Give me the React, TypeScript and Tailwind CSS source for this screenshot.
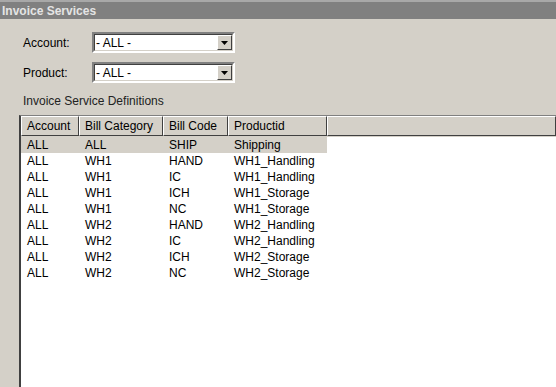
const rows = [
  ["ALL", "ALL", "SHIP", "Shipping"],
  ["ALL", "WH1", "HAND", "WH1_Handling"],
  ["ALL", "WH1", "IC", "WH1_Handling"],
  ["ALL", "WH1", "ICH", "WH1_Storage"],
  ["ALL", "WH1", "NC", "WH1_Storage"],
  ["ALL", "WH2", "HAND", "WH2_Handling"],
  ["ALL", "WH2", "IC", "WH2_Handling"],
  ["ALL", "WH2", "ICH", "WH2_Storage"],
  ["ALL", "WH2", "NC", "WH2_Storage"],
];

const cols = [
  { name: "Account", w: "w-[58px]" },
  { name: "Bill Category", w: "w-[84px]" },
  { name: "Bill Code", w: "w-[65px]" },
  { name: "Productid", w: "w-[99px]" },
];

const Select = () => (
  <div className="flex h-[21px] w-[143px] border-2 border-t-[#808080] border-l-[#808080] border-b-white border-r-white">
    <div className="flex flex-1 items-center border border-t-[#404040] border-l-[#404040] border-b-[#d4d0c8] border-r-[#d4d0c8] bg-white">
      <span className="flex-1 pl-px leading-none">- ALL -</span>
      <div className="flex h-[15px] w-[15px] items-center justify-center border border-t-white border-l-white border-b-[#404040] border-r-[#404040] bg-[#d4d0c8]">
        <svg width="7" height="4" viewBox="0 0 7 4">
          <path d="M0 0h7L3.5 4z" fill="#000" />
        </svg>
      </div>
    </div>
  </div>
);

export default function App() {
  return (
    <div className="flex h-[387px] w-[556px] flex-col overflow-hidden bg-[#d4d0c8] text-[12px] text-black [font-family:'Liberation_Sans',Arial,sans-serif]">
      <div className="flex h-[19px] shrink-0 items-center border-t-2 border-[#a8a8a8] bg-[#808080] pl-[2px] text-[12px] font-bold text-[#e4e4e4]">
        Invoice Services
      </div>
      <div className="flex flex-col gap-[9px] pl-[23px] pt-[13px]">
        <div className="flex items-center">
          <span className="w-[69px]">Account:</span>
          <Select />
        </div>
        <div className="flex items-center">
          <span className="w-[69px]">Product:</span>
          <Select />
        </div>
      </div>
      <div className="pl-[23px] pt-[9px] text-[#222]">Invoice Service Definitions</div>
      <div className="ml-[19px] mt-[5px] flex flex-1 flex-col border-l-2 border-t border-l-[#404040] border-t-[#808080] bg-white">
        <div className="flex h-[21px] shrink-0 bg-[#d4d0c8] pb-px">
          {cols.map((c) => (
            <div
              key={c.name}
              className={`${c.w} flex items-center border border-t-white border-l-white border-b-[#404040] border-r-[#404040] pl-[5px]`}
            >
              {c.name}
            </div>
          ))}
          <div className="flex-1 border border-t-white border-l-white border-b-[#404040] border-r-[#404040]" />
        </div>
        {rows.map((r, i) => (
          <div key={i} className={`flex h-[16px] w-[306px] items-center ${i === 0 ? "bg-[#d4d0c8]" : ""}`}>
            {r.map((v, j) => (
              <div key={j} className={`${cols[j].w} pl-[6px]`}>
                {v}
              </div>
            ))}
          </div>
        ))}
      </div>
    </div>
  );
}
